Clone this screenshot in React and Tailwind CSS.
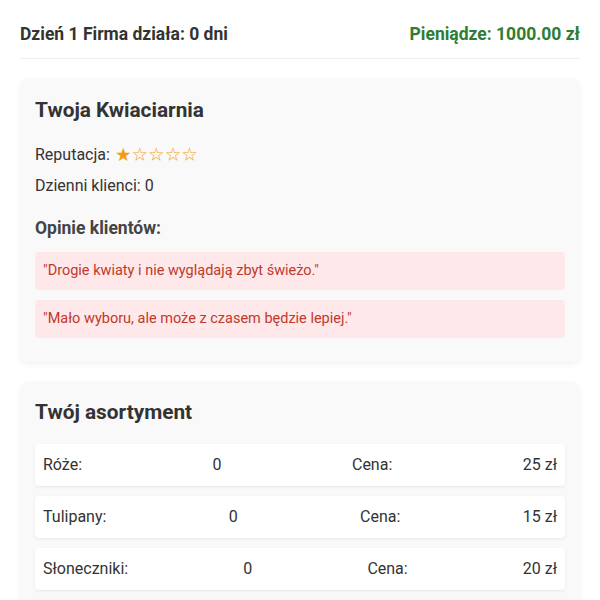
const reviews = [
  '"Drogie kwiaty i nie wyglądają zbyt świeżo."',
  '"Mało wyboru, ale może z czasem będzie lepiej."'
];

const stock = [
  { name: 'Róże:', qty: 0, price: 25 },
  { name: 'Tulipany:', qty: 0, price: 15 },
  { name: 'Słoneczniki:', qty: 0, price: 20 }
];

const Card = ({ children }) => (
  <section className="bg-[#f9f9f9] rounded-lg px-[15px] pt-[15px] pb-[24px] shadow-[0_2px_6px_rgba(0,0,0,0.06)]">
    {children}
  </section>
);

export default function App() {
  return (
    <div className="min-h-[600px] bg-white px-5 text-[#333] font-['Roboto',sans-serif]">
      <header className="flex items-center justify-between pt-[22px] pb-[12px] border-b border-[#eee] leading-[24px]">
        <span className="text-[17.5px] font-bold">Dzień 1 Firma działa: 0 dni</span>
        <span className="text-[17.5px] font-bold text-[#2e7d32]">Pieniądze: 1000.00 zł</span>
      </header>

      <div className="flex flex-col gap-5 pt-5">
        <Card>
          <h2 className="text-[20.8px] font-bold leading-[30px] mt-px">Twoja Kwiaciarnia</h2>
          <div className="mt-[18px] text-[16px] leading-[24px] flex items-center">
            Reputacja:
            <span className="ml-[5px] text-[#f39c12] font-['DejaVu_Sans',sans-serif] text-[18.5px] leading-none">★☆☆☆☆</span>
          </div>
          <div className="mt-[7px] text-[16px] leading-[24px]">Dzienni klienci: 0</div>
          <h3 className="mt-[17px] text-[17.5px] font-bold text-[#444] leading-[26px]">Opinie klientów:</h3>
          <div className="mt-[11px] flex flex-col gap-[10px]">
            {reviews.map((r) => (
              <div key={r} className="bg-[#ffe8ea] text-[#c0392b] text-[14.5px] rounded-[4px] px-[8px] py-[9px] leading-[20px]">
                {r}
              </div>
            ))}
          </div>
        </Card>

        <Card>
          <h2 className="text-[20.8px] font-bold leading-[30px]">Twój asortyment</h2>
          <div className="mt-[17px] flex flex-col gap-[10px]">
            {stock.map((s) => (
              <div key={s.name} className="flex justify-between bg-white rounded-[4px] px-[8px] py-[9px] text-[16px] leading-[24px] shadow-[0_1px_3px_rgba(0,0,0,0.08)]">
                <span>{s.name}</span>
                <span>{s.qty}</span>
                <span>Cena:</span>
                <span>{s.price} zł</span>
              </div>
            ))}
          </div>
        </Card>
      </div>
    </div>
  );
}
